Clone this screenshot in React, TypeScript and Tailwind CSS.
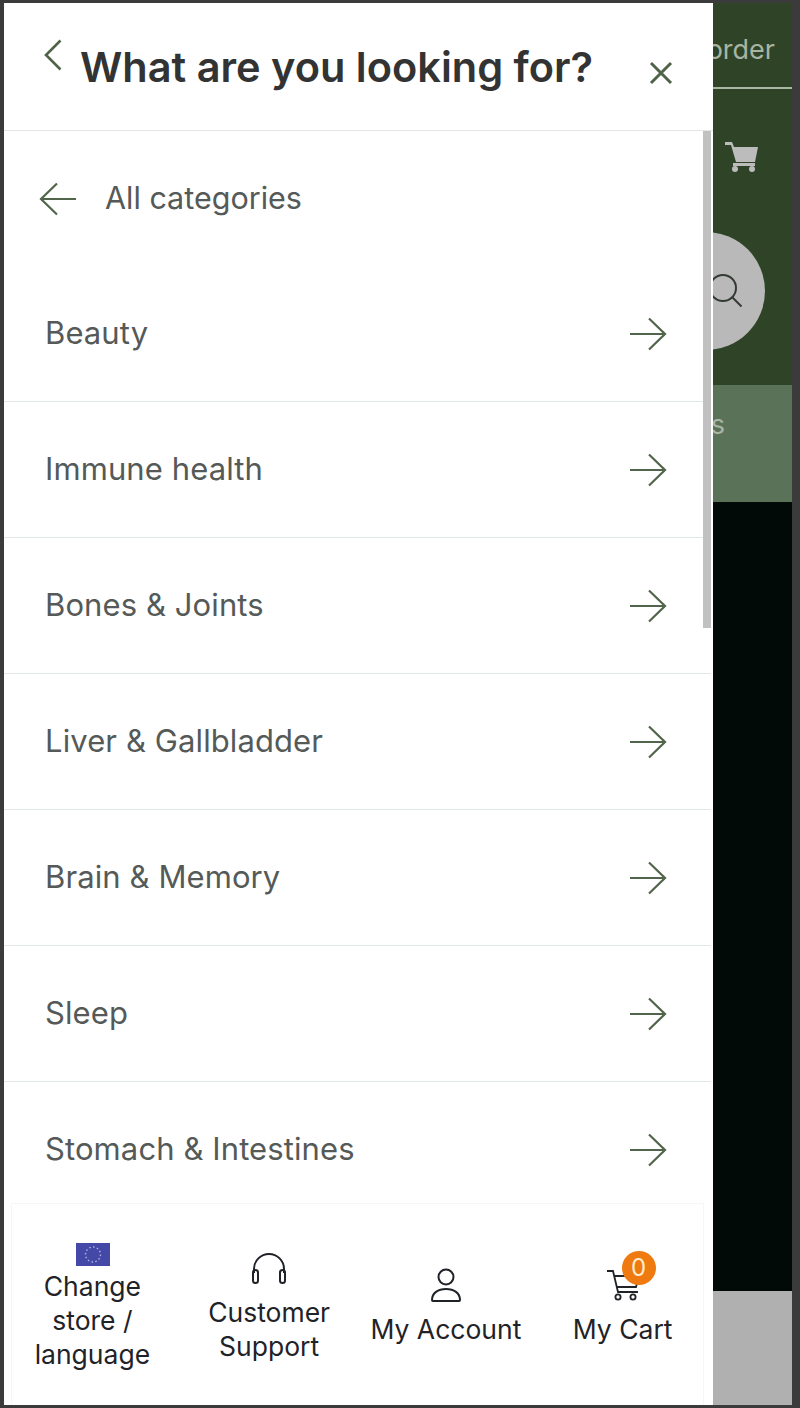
const categories = [
  "Beauty",
  "Immune health",
  "Bones & Joints",
  "Liver & Gallbladder",
  "Brain & Memory",
  "Sleep",
  "Stomach & Intestines",
];

function ArrowIcon({ flip = false }: { flip?: boolean }) {
  return (
    <svg width="39" height="34" viewBox="0 0 39 34" fill="none" stroke="#506549" strokeWidth="2.2" className={flip ? "rotate-180" : ""}>
      <path d="M2 17h35M21 1.5 37 17 21 32.5" />
    </svg>
  );
}

function FooterItem({ icon, label }: { icon: React.ReactNode; label: React.ReactNode }) {
  return (
    <div className="flex flex-col items-center justify-center text-center text-[26.5px] leading-[34px] text-[#1f2328]">
      {icon}
      <div>{label}</div>
    </div>
  );
}

function Flag() {
  return (
    <svg width="34" height="23" viewBox="0 0 34 23" className="mb-[3px] ml-[1px] mt-[1px]">
      <rect width="34" height="23" fill="#4448a6" />
      <circle cx="17" cy="11.5" r="7.5" fill="none" stroke="#aeb0dc" strokeWidth="1.4" strokeDasharray="1.6 2.3" />
    </svg>
  );
}

function Headphones() {
  return (
    <svg width="36" height="32" viewBox="0 0 36 32" fill="none" stroke="#1f2328" strokeWidth="2" className="mb-[10px] mt-[3px]">
      <path d="M3 20v-4a15 15 0 0 1 30 0v4" />
      <rect x="2" y="17" width="5" height="13" rx="2.5" />
      <rect x="29" y="17" width="5" height="13" rx="2.5" />
    </svg>
  );
}

function UserIcon() {
  return (
    <svg width="32" height="34" viewBox="0 0 32 34" fill="none" stroke="#1f2328" strokeWidth="2" className="mb-[10px]">
      <circle cx="16" cy="9" r="7.5" />
      <path d="M2 32c0-7 6-11 14-11s14 4 14 11c0 .6-.4 1-1 1H3c-.6 0-1-.4-1-1Z" />
    </svg>
  );
}

function CartWithBadge() {
  return (
    <div className="relative mb-[10px] h-[34px] w-[34px]">
      <svg width="34" height="34" viewBox="0 0 34 34" fill="none" stroke="#1f2328" strokeWidth="1.8">
        <path d="M1 3h6l5 21h20" />
        <path d="M8 8h25l-3 11H11" />
        <circle cx="12" cy="29" r="2.6" />
        <circle cx="27" cy="29" r="2.6" />
      </svg>
      <span className="absolute left-[16px] top-[-17px] flex h-[34px] w-[34px] items-center justify-center rounded-full bg-[#ee7a10] text-[24px] text-[#fdeccd]">
        0
      </span>
    </div>
  );
}

export default function App() {
  return (
    <div className="flex h-[1408px] w-[800px] overflow-hidden bg-[#3b3b3b] pb-[3px] pl-[4px] pr-[8px] pt-[3px] font-['Inter',sans-serif]">
      <aside className="relative z-10 flex w-[709px] shrink-0 flex-col overflow-hidden bg-white">
        <header className="flex h-[128px] shrink-0 border-b border-[#e4e6e6] pl-[40px] pr-[40px]">
          <svg width="18" height="32" viewBox="0 0 18 32" fill="none" stroke="#4f6349" strokeWidth="2.6" className="mt-[36px] shrink-0">
            <path d="M16.5 1.5 2 16l14.5 14.5" />
          </svg>
          <h1 className="ml-[18px] mt-[37px] whitespace-nowrap text-[41.5px] font-semibold leading-[54px] text-[#333333]">
            What are you looking for?
          </h1>
          <svg width="24" height="24" viewBox="0 0 24 24" fill="none" stroke="#4f6349" strokeWidth="3" className="ml-auto mt-[58px] shrink-0">
            <path d="M2 2l20 20M22 2 2 22" />
          </svg>
        </header>

        <div className="relative flex min-h-0 flex-1 flex-col pr-[2px]">
          <div className="absolute right-[2px] top-0 h-[497px] w-[8px] bg-[#c1c1c1]" />
          <div className="flex h-[135px] shrink-0 items-center pl-[35px]">
            <ArrowIcon flip />
            <span className="mb-[2px] ml-[27px] text-[30.5px] text-[#555a58]">All categories</span>
          </div>
          {categories.map((name) => (
            <div key={name} className="flex h-[136px] shrink-0 items-center justify-between border-b border-[#e2e7ea] pl-[41px] pr-[44px]">
              <span className="text-[31px] tracking-[0.1px] text-[#555a58]">{name}</span>
              <ArrowIcon />
            </div>
          ))}
        </div>

        <footer className="absolute bottom-0 left-0 right-[2px] grid h-[202px] grid-cols-4 bg-white pt-[5px]">
          <div className="pointer-events-none absolute inset-x-[7px] bottom-0 top-0 border-x border-t border-[#f5f6f6]" />
          <FooterItem icon={<Flag />} label={<>Change<br />store /<br />language</>} />
          <FooterItem icon={<Headphones />} label={<>Customer<br />Support</>} />
          <FooterItem icon={<UserIcon />} label="My Account" />
          <FooterItem icon={<CartWithBadge />} label="My Cart" />
        </footer>
      </aside>

      <div className="relative flex min-w-0 flex-1 flex-col overflow-hidden">
        <div className="flex h-[382px] flex-col bg-[#2f4427]">
          <div className="flex h-[86px] items-center justify-end whitespace-nowrap border-b-2 border-[#a8b5a3] pr-[17px] pt-[10px] text-[27px] text-[#a8b5a3]">
            Track order
          </div>
          <svg width="34" height="32" viewBox="0 0 34 32" fill="#bcbcbc" className="ml-[12px] mt-[52px]">
            <path d="M0 1h7l2 5h24l-3 15H11L6 4H0Z" />
            <rect x="8" y="22" width="22" height="3" />
            <circle cx="10" cy="28" r="3" />
            <circle cx="27" cy="28" r="3" />
          </svg>
          <div className="absolute left-[-66px] top-[229px] flex h-[118px] w-[118px] items-center justify-center rounded-full bg-[#b9b9b9]">
            <svg width="36" height="36" viewBox="0 0 36 36" fill="none" stroke="#333b33" strokeWidth="2" className="ml-[40px]">
              <circle cx="15" cy="15" r="13" />
              <path d="m24.5 24.5 9 9" />
            </svg>
          </div>
        </div>
        <div className="flex h-[117px] justify-end whitespace-nowrap bg-[#5a7358] pr-[67px] pt-[20px] text-[27px] text-[#a8b5a3]">
          Offers
        </div>
        <div className="h-[789px] bg-[#020a08]" />
        <div className="flex-1 bg-[#b0b0b0]" />
      </div>
    </div>
  );
}
